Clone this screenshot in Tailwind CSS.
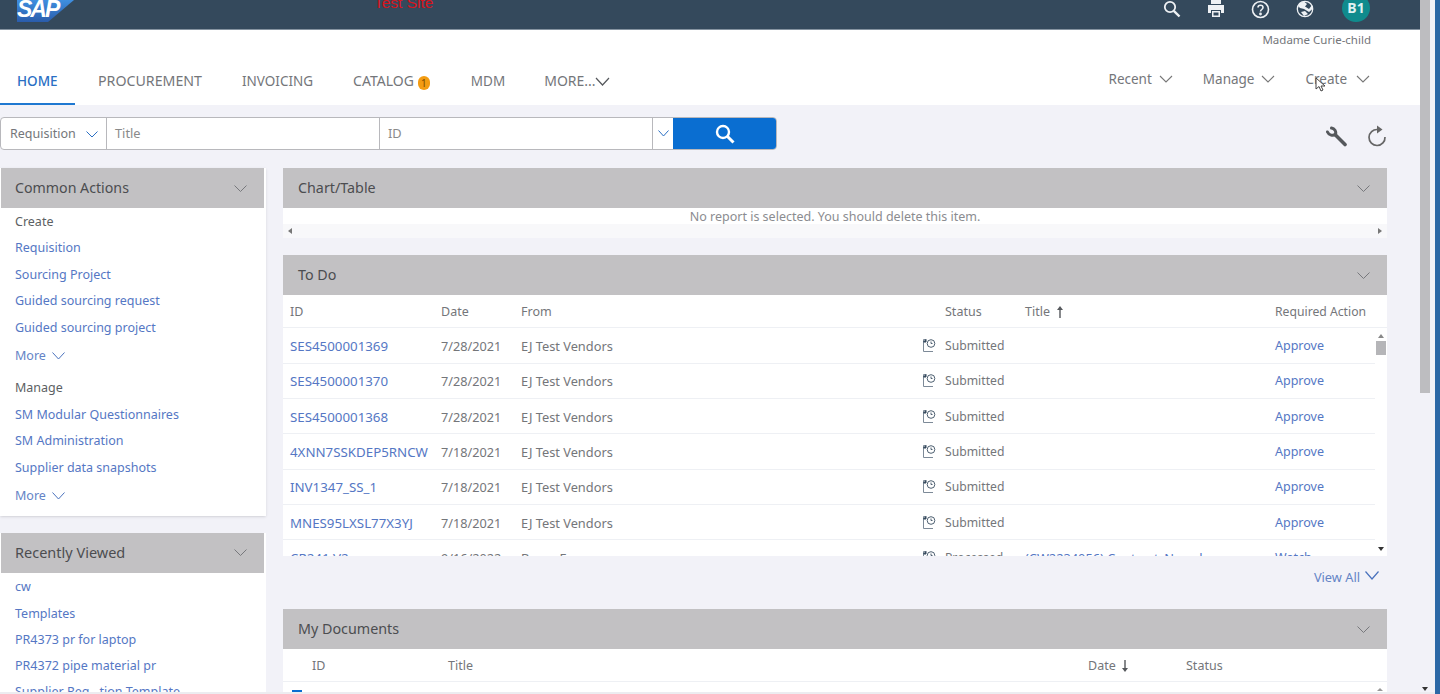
<!DOCTYPE html>
<html lang="en">
<head>
    <meta charset="UTF-8">
    <title>SAP Ariba</title>
    <script src="https://cdn.jsdelivr.net/npm/@tailwindcss/browser@4"></script>
</head>
<body class="bg-[#f2f2f8] overflow-hidden font-['Noto_Sans',sans-serif] text-[12.8px] text-[#74767a]">
<div class="flex h-[694px] overflow-hidden relative">
    <div class="w-[1420px] shrink-0">
        <!-- top bar -->
        <header class="h-[30px] bg-[#34495c] border-b border-[#8593a0] flex items-start relative overflow-hidden">
            <div class="ml-[17px] w-[57px] h-[22px] relative">
                <svg class="absolute inset-0" width="57" height="22" viewBox="0 0 57 22"><defs><linearGradient id="sapblue" x1="0" y1="0" x2="0" y2="1"><stop offset="0" stop-color="#3f8fe0"/><stop offset="1" stop-color="#2a5cab"/></linearGradient></defs><path d="M0 0H57L31 22H0Z" fill="url(#sapblue)"/></svg>
                <span class="absolute left-[0px] top-[-3px] text-[23px] font-bold italic leading-[24px] text-white font-['Liberation_Sans',sans-serif] tracking-[-2px]">SAP</span>
            </div>
            <span class="ml-[300px] mt-[-6px] text-[15.5px] leading-[18px] text-[#d8141c] font-['Liberation_Sans',sans-serif]">Test Site</span>
            <div class="ml-auto flex items-start text-white">
                <svg class="mt-[0px] w-[18px] h-[18px]" viewBox="0 0 18 18" fill="none" stroke="#eef1f4" stroke-width="1.8"><circle cx="7" cy="7" r="5.2"/><path d="M10.8 10.8L16.5 16.5" stroke-width="2.4"/></svg>
                <svg class="ml-[26px] mt-[0px] w-[18px] h-[18px]" viewBox="0 0 18 18" fill="#eef1f4"><rect x="4" y="0" width="10" height="4"/><path d="M1 5H17V13H14V10H4V13H1Z"/><path d="M5 11H13V17H5Z M6.5 12.5V15.5H11.5V12.5Z" fill-rule="evenodd"/></svg>
                <svg class="ml-[26px] mt-[0px] w-[19px] h-[19px]" viewBox="0 0 19 19" fill="none" stroke="#eef1f4" stroke-width="1.6"><circle cx="9.5" cy="9.5" r="8"/><path d="M7 7.5C7 4.5 12 4.5 12 7.5C12 9.5 9.5 9.5 9.5 11.5"/><circle cx="9.5" cy="14" r=".6" fill="#fff"/></svg>
                <svg class="ml-[26px] mt-[0px] w-[18px] h-[18px]" viewBox="0 0 18 18" fill="#eef1f4"><circle cx="9" cy="9" r="7.7" fill="none" stroke="#eef1f4" stroke-width="1.3"/><path d="M4 3L8 1.5L11 4L9 6.5L13 9L16 5L16.5 9L13 12L8 9L4 8L2 6Z M5 12L9 11L12 14L8 16Z"/></svg>
                <div class="ml-[28px] mr-[50px] mt-[-6px] w-[28px] h-[28px] rounded-full bg-[#108b8d] flex items-center justify-center text-[14px] font-bold leading-none text-[#dff1f1]">B1</div>
            </div>
        </header>

        <!-- nav -->
        <div class="h-[75px] bg-white relative">
            <div class="h-[20px] pr-[49px] text-right text-[11.5px] leading-[20px]">Madame Curie-child</div>
            <nav class="flex items-start h-[55px] text-[14px] pt-[20px]">
                <a class="w-[75px] h-[35px] pl-[17px] pt-[1px] text-[13.5px] leading-[20px] text-[#2a6fc4] font-medium border-b-2 border-[#1f78d1]">HOME</a>
                <a class="ml-[23px] pt-[1px] text-[14.2px] leading-[20px]">PROCUREMENT</a>
                <a class="ml-[40px] pt-[1px] text-[13.5px] leading-[20px]">INVOICING</a>
                <a class="ml-[40px] pt-[1px] leading-[20px] flex items-center">CATALOG<span class="ml-[4px] mt-[3px] w-[12px] h-[14px] rounded-full bg-[#f39c12] text-[#7a4a00] text-[10px] leading-[14px] text-center">1</span></a>
                <a class="ml-[41px] pt-[1px] text-[13.5px] leading-[20px]">MDM</a>
                <a class="ml-[39px] pt-[1px] leading-[20px] flex items-center">MORE...<svg class="ml-[-1px] w-[15px] h-[9px]" viewBox="0 0 15 9" fill="none" stroke="#55585c" stroke-width="1.2"><path d="M1 1L7.5 8L14 1"/></svg></a>
                <div class="ml-auto flex pr-[50px] text-[13.5px]">
                    <a class="leading-[18px] flex items-center">Recent<svg class="ml-[7px] w-[14px] h-[8px]" viewBox="0 0 14 8" fill="none" stroke="#777" stroke-width="1.1"><path d="M1 1L7 7L13 1"/></svg></a>
                    <a class="ml-[30px] leading-[18px] flex items-center">Manage<svg class="ml-[7px] w-[14px] h-[8px]" viewBox="0 0 14 8" fill="none" stroke="#777" stroke-width="1.1"><path d="M1 1L7 7L13 1"/></svg></a>
                    <a class="ml-[30px] leading-[18px] flex items-center relative">Create<svg class="ml-[9px] w-[14px] h-[8px]" viewBox="0 0 14 8" fill="none" stroke="#777" stroke-width="1.1"><path d="M1 1L7 7L13 1"/></svg>
                        <svg class="absolute left-[10px] top-[7px] w-[11px] h-[16px]" viewBox="0 0 11 16"><path d="M1 1V12L4 9.5L6 14L8 13L6 9H10Z" fill="#fff" stroke="#444"/></svg>
                    </a>
                </div>
            </nav>
        </div>

        <!-- search row -->
        <div class="h-[63px] pt-[12px] flex items-start">
            <div class="flex h-[33px] w-[777px] rounded-[4px] border border-[#b8b8bc] bg-white overflow-hidden">
                <div class="w-[106px] flex items-center pl-[9px] pt-px text-[12.5px] border-r border-[#b8b8bc]">Requisition<svg class="ml-[10px] w-[12px] h-[7px]" viewBox="0 0 12 7" fill="none" stroke="#2a6fc4"><path d="M.5 .5L6 6L11.5 .5"/></svg></div>
                <div class="w-[273px] flex items-center pl-[8px] pt-px border-r border-[#b8b8bc] text-[#8a8a8a]">Title</div>
                <div class="w-[273px] flex items-center pl-[8px] pt-px border-r border-[#b8b8bc] text-[#8a8a8a]">ID</div>
                <div class="w-[20px] flex items-center justify-center"><svg class="w-[11px] h-[7px]" viewBox="0 0 11 7" fill="none" stroke="#2a6fc4"><path d="M.5 .5L5.5 6L10.5 .5"/></svg></div>
                <div class="flex-1 bg-[#0a6ed1] flex items-center justify-center"><svg class="w-[20px] h-[20px]" viewBox="0 0 20 20" fill="none" stroke="#fff" stroke-width="2.4"><circle cx="8" cy="8" r="6"/><path d="M12.5 12.5L18.5 18.5" stroke-width="3"/></svg></div>
            </div>
            <div class="ml-auto mr-[33px] mt-[8px] flex items-center">
                <svg class="w-[21px] h-[21px]" viewBox="0 0 21 21" fill="none" stroke="#55585c" stroke-linecap="round"><path d="M1.5 6C3 9.5 7 10 9.5 8.5C10.5 5.5 8.5 2.5 5.5 2" stroke-width="3"/><path d="M9 8.5L19 18.5" stroke-width="3.6"/></svg>
                <svg class="ml-[20px] w-[20px] h-[22px]" viewBox="0 0 20 22" fill="none" stroke="#666" stroke-width="1.7"><path d="M10.5 4.5A8 8 0 1 0 18 12"/><path d="M10 0.5L15.5 4.5L10 8.5Z" fill="#666" stroke="none"/></svg>
            </div>
        </div>

        <div class="flex items-start">
            <!-- left column -->
            <aside class="w-[266px] shrink-0">
                <div class="bg-white pb-[7px] shadow-sm">
                    <div class="h-[40px] w-[263px] ml-px bg-[#c2c1c3] flex items-center justify-between pl-[14px] pr-[17px] text-[14.2px] text-[#4c4d50]">Common Actions<svg class="w-[13px] h-[7px]" viewBox="0 0 13 7" fill="none" stroke="#77787c"><path d="M.5 .5L6.5 6.5L12.5 .5"/></svg></div>
                    <ul class="pl-[15px] pt-[1px] text-[12.5px] text-[#5577c4] leading-[26.4px]">
                        <li class="text-[#5c5f63]">Create</li>
                        <li>Requisition</li>
                        <li>Sourcing Project</li>
                        <li>Guided sourcing request</li>
                        <li>Guided sourcing project</li>
                        <li class="mt-[2px] flex items-center text-[#6484c6]">More<svg class="ml-[6px] w-[13px] h-[8px]" viewBox="0 0 13 8" fill="none" stroke="#4a72bd"><path d="M.5 .5L6.5 7L12.5 .5"/></svg></li>
                        <li class="mt-[6px] text-[#5c5f63]">Manage</li>
                        <li>SM Modular Questionnaires</li>
                        <li>SM Administration</li>
                        <li>Supplier data snapshots</li>
                        <li class="mt-[2px] flex items-center text-[#6484c6]">More<svg class="ml-[6px] w-[13px] h-[8px]" viewBox="0 0 13 8" fill="none" stroke="#4a72bd"><path d="M.5 .5L6.5 7L12.5 .5"/></svg></li>
                    </ul>
                </div>
                <div class="mt-[17px] bg-white">
                    <div class="h-[40px] w-[263px] ml-px bg-[#c2c1c3] flex items-center justify-between pl-[14px] pr-[17px] pb-px text-[14.5px] text-[#4c4d50]">Recently Viewed<svg class="w-[13px] h-[7px]" viewBox="0 0 13 7" fill="none" stroke="#77787c"><path d="M.5 .5L6.5 6.5L12.5 .5"/></svg></div>
                    <ul class="pl-[15px] pt-[1px] text-[12.5px] text-[#5577c4] leading-[26.2px]">
                        <li>cw</li>
                        <li>Templates</li>
                        <li>PR4373 pr for laptop</li>
                        <li>PR4372 pipe material pr</li>
                        <li>Supplier Reg...tion Template</li>
                    </ul>
                </div>
            </aside>

            <!-- main column -->
            <main class="w-[1104px] ml-[17px] shrink-0">
                <section>
                    <div class="h-[40px] bg-[#c2c1c3] flex items-center justify-between pl-[15px] pr-[17px] text-[14.3px] text-[#4c4d50]">Chart/Table<svg class="w-[13px] h-[7px]" viewBox="0 0 13 7" fill="none" stroke="#77787c"><path d="M.5 .5L6.5 6.5L12.5 .5"/></svg></div>
                    <div class="h-[16px] bg-white text-center text-[12.5px] leading-[18px] text-[#8b8c90]">No report is selected. You should delete this item.</div>
                    <div class="h-[14px] bg-[#f8f8fa] relative">
                        <span class="absolute left-[5px] top-[4px] border-y-[3px] border-y-transparent border-r-[4px] border-r-[#777]"></span>
                        <span class="absolute right-[5px] top-[4px] border-y-[3px] border-y-transparent border-l-[4px] border-l-[#777]"></span>
                    </div>
                </section>

                <section class="mt-[17px]">
                    <div class="h-[40px] bg-[#c2c1c3] flex items-center justify-between pl-[15px] pr-[17px] text-[14.3px] text-[#4c4d50]">To Do<svg class="w-[13px] h-[7px]" viewBox="0 0 13 7" fill="none" stroke="#77787c"><path d="M.5 .5L6.5 6.5L12.5 .5"/></svg></div>
                    <div class="h-[33px] bg-white flex items-center border-b border-[#eef0f4] pl-[7px] pt-[2px] text-[12.5px]">
                        <span class="w-[151px]">ID</span>
                        <span class="w-[80px]">Date</span>
                        <span class="w-[424px]">From</span>
                        <span class="w-[80px]">Status</span>
                        <span class="w-[250px] flex items-center">Title<svg class="ml-[6px] w-[8px] h-[12px]" viewBox="0 0 8 12" fill="#55585c"><path d="M4 0L7 4H4.7V12H3.3V4H1Z"/></svg></span>
                        <span class="text-[12.2px]">Required Action</span>
                    </div>
                    <div class="h-[228px] bg-white overflow-hidden relative">
                        <table class="w-[1092px] table-fixed">
                            <colgroup><col class="w-[158px]"><col class="w-[80px]"><col class="w-[401px]"><col class="w-[23px]"><col class="w-[80px]"><col class="w-[250px]"><col></colgroup>
                            <tbody id="todo-rows"></tbody>
                        </table>
                        <div class="absolute right-0 top-0 bottom-0 w-[12px] bg-white">
                            <span class="absolute left-[3px] top-[6px] border-x-[3px] border-x-transparent border-b-[4px] border-b-[#888]"></span>
                            <span class="absolute left-[1px] top-[13px] w-[10px] h-[14px] bg-[#b5b5b8]"></span>
                            <span class="absolute left-[3px] bottom-[5px] border-x-[3px] border-x-transparent border-t-[4px] border-t-[#333]"></span>
                        </div>
                    </div>
                    <div class="h-[39px] flex items-start justify-end pt-[12px] pr-[8px] text-[#6484c6]">View All<svg class="ml-[5px] mt-[3px] w-[14px] h-[9px]" viewBox="0 0 14 9" fill="none" stroke="#4a72bd" stroke-width="1.2"><path d="M.5 .5L7 8L13.5 .5"/></svg></div>
                </section>

                <section class="mt-[14px]">
                    <div class="h-[40px] bg-[#c2c1c3] flex items-center justify-between pl-[15px] pr-[17px] text-[14.3px] text-[#4c4d50]">My Documents<svg class="w-[13px] h-[7px]" viewBox="0 0 13 7" fill="none" stroke="#77787c"><path d="M.5 .5L6.5 6.5L12.5 .5"/></svg></div>
                    <div class="h-[33px] bg-white flex items-center border-b border-[#eef0f4] pl-[29px] pt-[2px] text-[12.5px]">
                        <span class="w-[136px]">ID</span>
                        <span class="w-[640px]">Title</span>
                        <span class="w-[98px] flex items-center">Date<svg class="ml-[5px] w-[8px] h-[12px]" viewBox="0 0 8 12" fill="#55585c"><path d="M4 12L7 8H4.7V0H3.3V8H1Z"/></svg></span>
                        <span>Status</span>
                    </div>
                    <div class="h-[10px] bg-white relative overflow-hidden">
                        <span class="absolute left-[9px] top-[8px] w-[10px] h-[3px] bg-[#0a6ed1]"></span>
                        <span class="absolute right-[4px] top-[6px] border-x-[3px] border-x-transparent border-b-[3px] border-b-[#999]"></span>
                    </div>
                </section>
            </main>
        </div>
    </div>

    <!-- page scrollbar -->
    <div class="w-[15px] shrink-0 relative">
        <div class="w-[10px] h-[393px] bg-[#bdbdc0]"></div>
        <span class="absolute left-[2px] bottom-[3px] border-x-[3px] border-x-transparent border-t-[4px] border-t-[#333]"></span>
    </div>
    <div class="w-[5px] shrink-0 bg-[#2c68a6]"></div>

    <!-- window bottom edge -->
    <div class="absolute left-0 bottom-0 w-[1435px] h-[2px] bg-[#ececf0]"></div>
</div>

<script>
    const rows = [
        ['SES4500001369', '7/28/2021', 'EJ Test Vendors', 'Submitted', '', 'Approve'],
        ['SES4500001370', '7/28/2021', 'EJ Test Vendors', 'Submitted', '', 'Approve'],
        ['SES4500001368', '7/28/2021', 'EJ Test Vendors', 'Submitted', '', 'Approve'],
        ['4XNN7SSKDEP5RNCW', '7/18/2021', 'EJ Test Vendors', 'Submitted', '', 'Approve'],
        ['INV1347_SS_1', '7/18/2021', 'EJ Test Vendors', 'Submitted', '', 'Approve'],
        ['MNES95LXSL77X3YJ', '7/18/2021', 'EJ Test Vendors', 'Submitted', '', 'Approve'],
        ['CR241 V2', '9/16/2022', 'Buyer F', 'Processed', '(CW2234056) Contract_Norsch', 'Watch'],
    ];
    const docIcon = `<svg width="14" height="15" viewBox="0 0 14 15" fill="none" stroke="#7d8a98"><path d="M4 1.5H1.5V13.5H11"/><path d="M1.5 4L4 1.5V4Z" fill="#34495c" stroke="#34495c"/><circle cx="9" cy="5.5" r="3.8" stroke="#4d5f70"/><path d="M9 3.5V5.5H10.5" stroke="#4d5f70"/></svg>`;
    document.getElementById('todo-rows').innerHTML = rows.map(r => `
        <tr class="h-[35.3px] border-b border-[#eef0f4] leading-[18px]">
            <td class="pl-[7px] pt-px text-[#5577c4] text-[13.3px] whitespace-nowrap">${r[0]}</td>
            <td class="pt-px text-[12.7px]">${r[1]}</td>
            <td class="pt-px">${r[2]}</td>
            <td>${docIcon}</td>
            <td class="pt-px text-[12.2px]">${r[3]}</td>
            <td class="pt-px text-[#5577c4] whitespace-nowrap">${r[4]}</td>
            <td class="pt-px text-[12.5px] text-[#5577c4]">${r[5]}</td>
        </tr>`).join('');
</script>
</body>
</html>
